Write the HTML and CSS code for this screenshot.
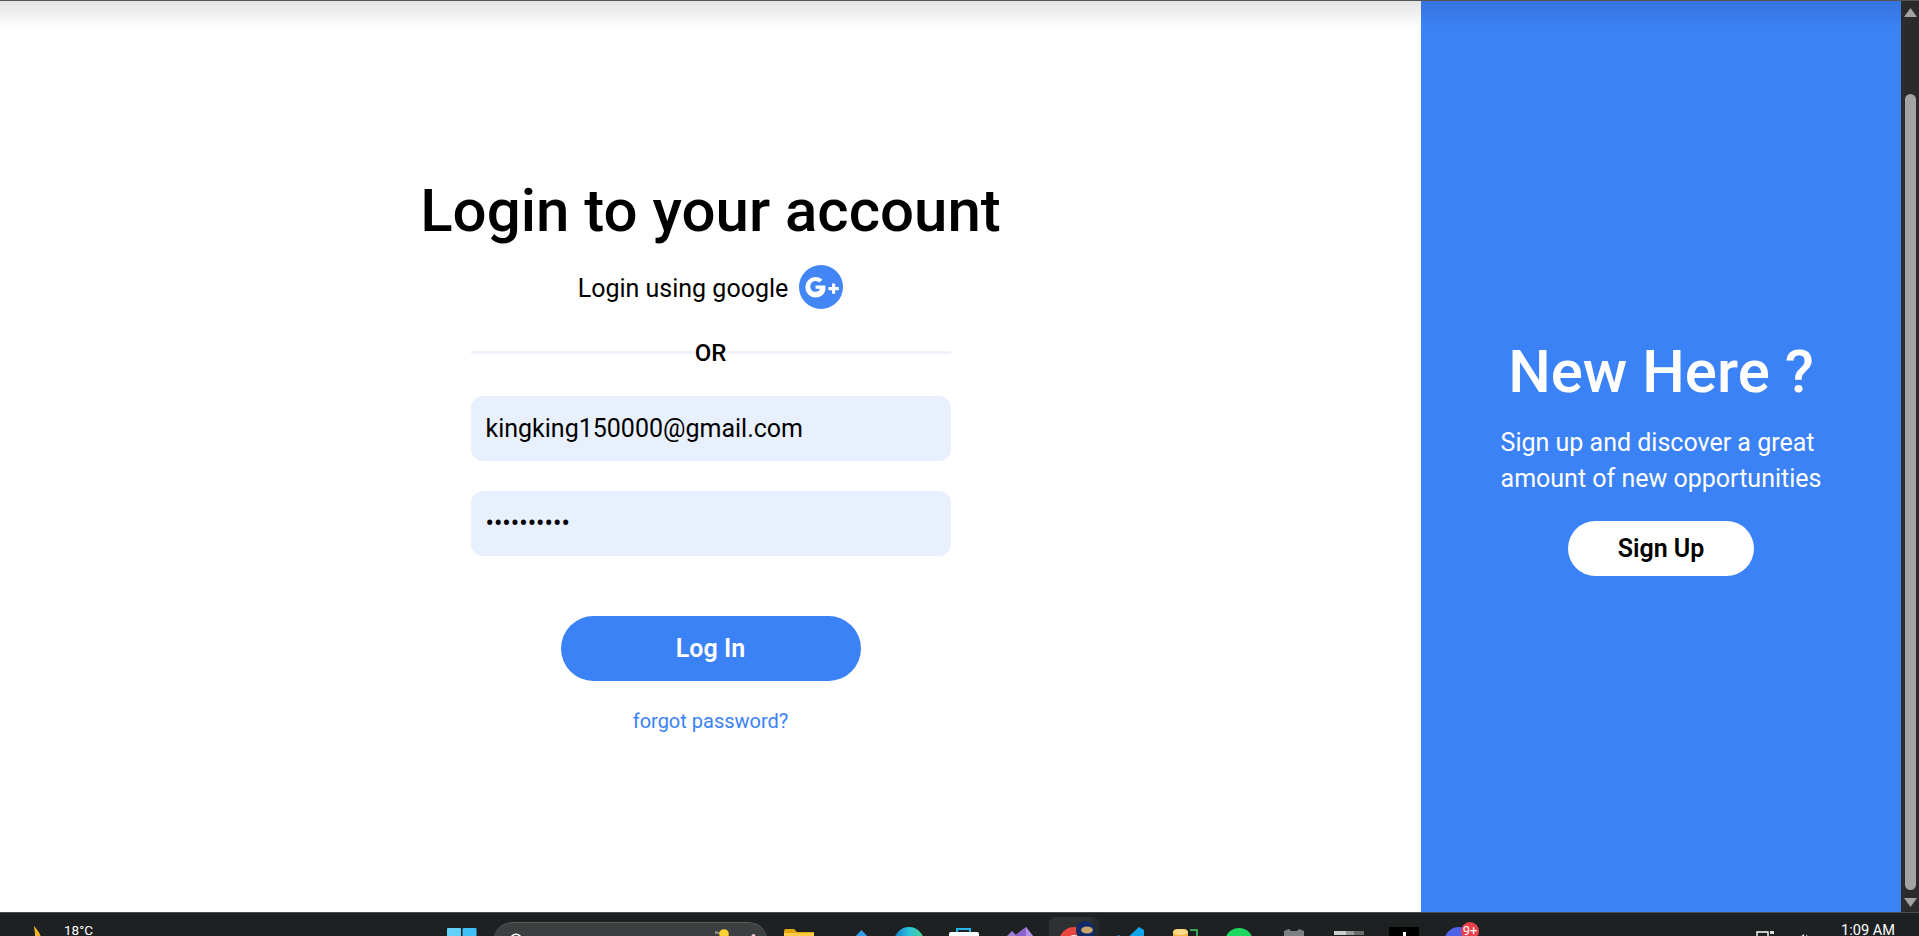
FILE: index.html
```html
<!DOCTYPE html>
<html lang="en">
<head>
  <meta charset="UTF-8" />
  <meta name="viewport" content="width=device-width, initial-scale=1.0"/>
  <title>Login</title>
  <link rel="stylesheet" href="styles.css">
</head>
<body>

  <div class="window">
    <div class="page">
      <main class="login">
        <h1>Login to your account</h1>
        <div class="google">
          <span>Login using google</span>
          <svg class="gplus" viewBox="0 0 44 44" aria-hidden="true">
            <circle cx="22" cy="22" r="22" fill="#4285f4"/>
            <path transform="translate(-4 0)" d="M20.500 20.500h9.800c.1 .8 .2 1.700 .2 2.600 0 5.600-4 9.400-10 9.400a10.200 10.200 0 1 1 0-20.400c2.800 0 5 .9 6.900 2.600l-3 2.900c-.8-.7-2-1.600-3.900-1.600-3 0-5.200 2.500-5.200 5.400s2.200 5.400 5.200 5.400c3 0 4.100-1.800 4.400-3h-4.400z" fill="#fff"/>
            <path d="M33 18.400h3.200v3.600h3.600v3.200h-3.600v3.600H33v-3.600h-3.600V22H33z" fill="#fff"/>
          </svg>
        </div>
        <div class="divider"><span>OR</span></div>
        <form class="login-form">
          <input type="email" value="kingking150000@gmail.com">
          <input type="password" value="••••••••••">
          <button type="button" class="btn-login">Log In</button>
        </form>
        <a class="forgot" href="#">forgot password?</a>
      </main>

      <aside class="signup">
        <h2>New Here ?</h2>
        <p>Sign up and discover a great<br>amount of new opportunities</p>
        <button type="button" class="btn-signup">Sign Up</button>
      </aside>

      <div class="scrollbar">
        <svg class="arrow" viewBox="0 0 13 9"><path d="M6.500 0l6.500 9H0z"/></svg>
        <div class="track"><div class="thumb"></div></div>
        <svg class="arrow" viewBox="0 0 13 9"><path d="M0 0h13L6.500 9z"/></svg>
      </div>
    </div>
  </div>

  <footer class="taskbar">
    <div class="weather">
      <svg class="moon" viewBox="0 0 14 20"><path d="M7 0c3 4 7 7 7 13 0 4-3 7-7 7-3 0-6-2-7-4 5 1 8-2 8-7 0-4-1-6-1-9z" fill="#f5b32d"/></svg>
      <span>18°C</span>
    </div>

    <svg class="app-icon start" viewBox="0 0 30 30">
      <rect x="0" y="1" width="14" height="14" rx="1" fill="#62d2fb"/>
      <rect x="15.500" y="1" width="14" height="14" rx="1" fill="#3fc0f7"/>
      <rect x="0" y="16.500" width="14" height="13" rx="1" fill="#29b6f6"/>
      <rect x="15.500" y="16.500" width="14" height="13" rx="1" fill="#0288d1"/>
    </svg>

    <div class="search">
      <svg class="search-icon" viewBox="0 0 14 14"><circle cx="7" cy="7" r="5.700" fill="none" stroke="#fff" stroke-width="1.600"/></svg>
      <svg class="duck" viewBox="0 0 15 14"><path d="M0 2l5 1v2L0 5z" fill="#8d8d80"/><circle cx="9" cy="5" r="4.800" fill="#fbd22e"/><ellipse cx="9" cy="12" rx="6" ry="4.500" fill="#f5c518"/></svg>
      <svg class="flower" viewBox="0 0 13 8"><circle cx="3" cy="5" r="2.500" fill="#e8b4c4"/><circle cx="10" cy="5" r="2.500" fill="#e8b4c4"/><circle cx="6.500" cy="2" r="2" fill="#f0c6d2"/></svg>
    </div>

    <div class="apps">
      <div class="cell">
        <svg class="app-icon" viewBox="0 0 30 30"><path d="M0 4a2 2 0 0 1 2-2h8l3 3h17v25H0z" fill="#e3a50f"/><rect x="0" y="6" width="30" height="24" fill="#ffcb45"/></svg>
      </div>
      <div class="cell">
        <svg class="app-icon" viewBox="0 0 30 30"><path d="M22.500 3L32 13H13z" fill="#2f9fe8"/></svg>
      </div>
      <div class="cell">
        <svg class="app-icon" viewBox="0 0 30 30">
          <defs><linearGradient id="edge" x1="0" y1="0" x2="1" y2="0"><stop offset="0" stop-color="#1777c4"/><stop offset=".5" stop-color="#2ac3dc"/><stop offset="1" stop-color="#4fd08a"/></linearGradient></defs>
          <circle cx="15" cy="15" r="15" fill="url(#edge)"/>
        </svg>
      </div>
      <div class="cell">
        <svg class="app-icon" viewBox="0 0 30 30"><path d="M8 7V2h13v5" fill="none" stroke="#27b4ea" stroke-width="2"/><rect x="0" y="5" width="30" height="25" rx="2" fill="#fff"/></svg>
      </div>
      <div class="cell">
        <svg class="app-icon" viewBox="0 0 30 30"><path d="M0 12l8-8 8 8-8 8z" fill="#9b7fd6"/><path d="M9 10l13-10 8 10-8 10z" fill="#b48ee8"/><path d="M9 10l13-10v20z" fill="#8a63cc"/></svg>
      </div>
      <div class="cell cell-active">
        <svg class="app-icon" viewBox="0 0 30 30"><circle cx="15" cy="15" r="15" fill="#e8453c"/><circle cx="15" cy="15" r="7" fill="#fff"/></svg>
        <svg class="avatar" viewBox="0 0 19 19"><circle cx="9.500" cy="9.500" r="9.500" fill="#0d2a6b"/><ellipse cx="11" cy="9" rx="6" ry="3.500" fill="#c9a46c"/></svg>
      </div>
      <div class="cell">
        <svg class="app-icon" viewBox="0 0 30 30"><path d="M25 0l5 3v24l-5 3L11 17l-6 5-5-3 6-4-6-4 5-3 6 5z" fill="#0fa5ea"/></svg>
      </div>
      <div class="cell">
        <svg class="app-icon" viewBox="0 0 30 30"><rect x="4" y="2" width="15" height="28" rx="4" fill="#f3b93f"/><ellipse cx="11.500" cy="5" rx="7.500" ry="3" fill="#fbd98a"/><path d="M21 3h7v10" fill="none" stroke="#3ea356" stroke-width="2"/></svg>
      </div>
      <div class="cell">
        <svg class="app-icon" viewBox="0 0 30 30"><circle cx="15" cy="15" r="14" fill="#1ed760"/></svg>
      </div>
      <div class="cell">
        <svg class="app-icon" viewBox="0 0 30 30"><path d="M5 4l5-2 2 2h6l2-2 5 2v26H5z" fill="#7a7f82"/></svg>
      </div>
      <div class="cell">
        <svg class="app-icon" viewBox="0 0 30 30"><rect x="0" y="4" width="12" height="4" fill="#cfcfcf"/><rect x="12" y="4" width="8" height="4" fill="#9a9a9a"/><rect x="20" y="4" width="10" height="4" fill="#6d6d6d"/></svg>
      </div>
      <div class="cell">
        <svg class="app-icon" viewBox="0 0 30 30"><rect width="30" height="30" fill="#000"/><rect x="14" y="5" width="3" height="20" fill="#fff"/></svg>
      </div>
      <div class="cell">
        <svg class="app-icon" viewBox="0 0 30 30"><circle cx="15" cy="15" r="15" fill="#4f63e8"/></svg>
        <span class="badge">9+</span>
      </div>
    </div>

    <div class="tray">
      <svg class="tray-wifi" viewBox="0 0 19 16"><path d="M1 1h11v12H1z" fill="none" stroke="#fff" stroke-width="1.400"/><rect x="14" y="0" width="4" height="3" fill="#ddd"/></svg>
      <svg class="tray-sound" viewBox="0 0 13 14"><path d="M0 4h3l4-3v12l-4-3H0z" fill="#ddd"/><path d="M9 2c2 1 3 3 3 5" fill="none" stroke="#ddd"/></svg>
      <span class="clock">1:09 AM</span>
    </div>
  </footer>

</body>
</html>
```

FILE: styles.css
```css
*{margin:0;padding:0;box-sizing:border-box}
html,body{height:100%;overflow:hidden}
body{font-family:Roboto,sans-serif;background:#fff;color:#000}
.window{height:912px;border-top:1px solid #555;position:relative}
.window::before{content:"";position:absolute;left:0;right:18px;top:0;height:26px;background:linear-gradient(rgba(0,0,0,0.11),rgba(0,0,0,0));pointer-events:none}
.page{display:flex;height:100%}

.login{width:1421px;display:flex;flex-direction:column;align-items:center;padding-top:175px}
.login h1{font-size:60px;font-weight:500;line-height:70px}
.google{display:flex;align-items:center;gap:11px;margin-top:19px;font-size:25px;height:44px}
.google span{position:relative;top:1px}
.gplus{width:44px;height:44px}
.divider{width:480px;height:3px;background:#eef2fb;margin-top:42px;display:flex;justify-content:center;align-items:center}
.divider span{background:#fff;font-size:24px;font-weight:500;line-height:28px}
.login-form{width:480px;margin-top:42px;display:flex;flex-direction:column;align-items:center;gap:30px}
.login-form input{width:100%;height:65px;border:none;outline:none;border-radius:12px;background:#e8f0fd;padding:0 15px;font-family:Roboto,sans-serif;font-size:25px;color:#000}
.btn-login{width:300px;height:65px;margin-top:30px;border:none;border-radius:33px;background:#3b82f6;color:#fff;font-family:Roboto,sans-serif;font-size:25px;font-weight:600}
.forgot{margin-top:28px;font-size:20px;color:#3b82f6;text-decoration:none}

.signup{width:480px;background:#3b82f6;color:#fff;display:flex;flex-direction:column;align-items:center;padding-top:336px}
.signup h2{font-size:60px;font-weight:500;line-height:70px}
.signup p{margin-top:18px;font-size:25px;line-height:36px}
.btn-signup{width:186px;height:55px;margin-top:24px;border:none;border-radius:28px;background:#fff;color:#000;font-family:Roboto,sans-serif;font-size:25px;font-weight:600}

.scrollbar{width:18px;background:#2b2b2b;display:flex;flex-direction:column;align-items:center}
.arrow{width:13px;height:9px;fill:#a3a3a3;margin:7px 0 3px;flex:none}
.scrollbar .arrow:last-child{margin:3px 0 5px}
.track{flex:1;width:100%;padding:74px 0 5px;display:flex;justify-content:center}
.thumb{width:11px;height:100%;background:#a3a3a3;border-radius:6px}

.taskbar{height:24px;background:#1d2122;border-top:1px solid #4a4d4e;overflow:hidden;display:flex;align-items:flex-start}
.weather{width:447px;padding-left:27px;display:flex;color:#fff;font-size:13.5px}
.moon{width:14px;height:20px;margin-top:13px;flex:none}
.weather span{line-height:16px;margin-top:9px;margin-left:23px}
.app-icon{display:block;width:30px;height:30px;flex:none;overflow:hidden}
.start{margin-top:14px}
.search{width:275px;height:40px;margin:9px 0 0 16px;padding:0 8px 0 16px;border-radius:20px;background:#3c3f40;border-top:1px solid #5a5c5c;display:flex;align-items:flex-start}
.search-icon{width:14px;height:14px;margin-top:10px}
.duck{width:15px;height:14px;margin:6px 0 0 auto}
.flower{width:13px;height:8px;margin:11px 0 0 17px}
.apps{display:flex;margin-left:3px}
.cell{width:55px;padding-top:14px;display:flex;justify-content:center;position:relative}
.cell-active::before{content:"";position:absolute;left:3px;top:4px;width:45px;height:40px;background:#2e3132;border-radius:6px;box-shadow:5px 0 0 #26292a}
.cell-active .app-icon{position:relative}
.avatar{position:absolute;left:30px;top:8px;width:19px;height:19px}
.badge{position:absolute;left:30px;top:9px;width:18px;height:18px;border-radius:50%;background:#e8404c;color:#fff;font-size:13px;text-align:center;line-height:18px}
.tray{margin-left:auto;padding-right:24px;display:flex;color:#fff}
.tray-wifi{width:19px;height:16px;margin-top:18px}
.tray-sound{width:13px;height:14px;margin:20px 0 0 22px}
.clock{font-size:14.6px;line-height:16px;margin:9px 0 0 31px}
```
